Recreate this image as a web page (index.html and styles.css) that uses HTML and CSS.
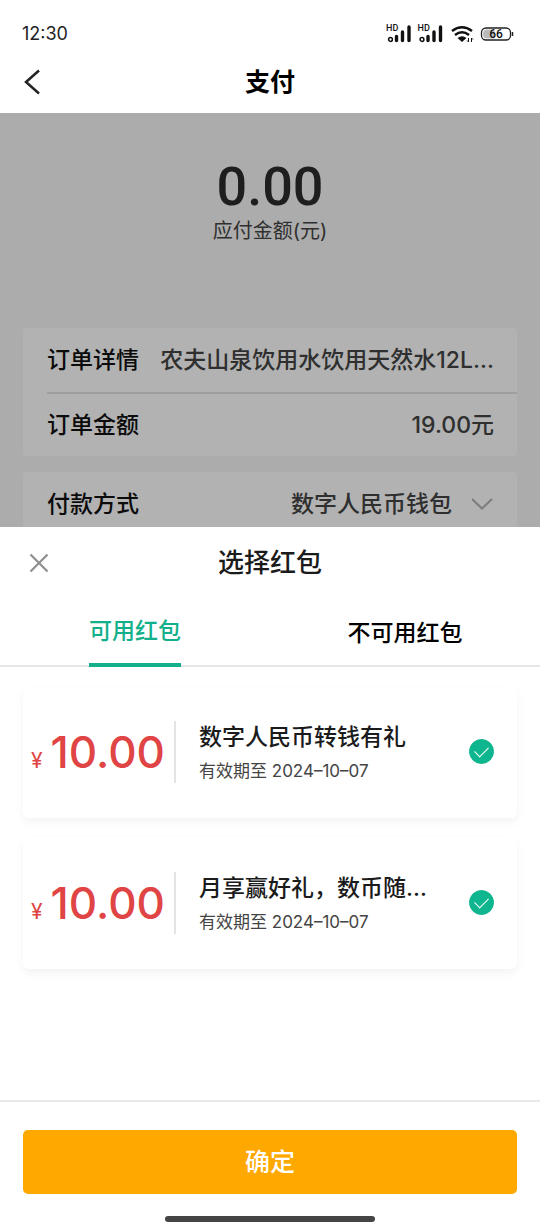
FILE: index.html
```html
<!DOCTYPE html>
<html lang="zh-CN">
<head>
<meta charset="utf-8">
<meta name="viewport" content="width=device-width, initial-scale=1">
<title>支付</title>
<link rel="stylesheet" href="styles.css">
</head>
<body>
<div class="status-bar">
  <span class="clock">12:30</span>
  <svg class="status-icons" width="130" height="24" viewBox="0 0 130 24" aria-hidden="true">
    <defs>
      <g id="signal">
        <text x="0" y="9" class="hd">HD</text>
        <circle cx="4.500" cy="17.500" r="1.900" fill="none" stroke="#111" stroke-width="1.500"/>
        <path d="M10.500 18.500V14.500M16.500 18.500V10M23 18.500V5" fill="none" stroke="#111" stroke-width="3.400" stroke-linecap="round"/>
      </g>
    </defs>
    <use href="#signal" x="0" y="0"/>
    <use href="#signal" x="31.500" y="0"/>
    <g fill="none" stroke="#111" stroke-width="2.500">
      <path d="M66 9Q76 1.500 86 9"/>
      <path d="M69 13Q76 7.500 83 13"/>
    </g>
    <path d="M71.500 16Q76 12.500 80.500 16L76 20Z" fill="#111"/>
    <path d="M82.500 16v4l-1.500-1.500M85.500 20v-4l1.500 1.500" fill="none" stroke="#111" stroke-width="1"/>
    <rect x="95.500" y="6" width="29" height="12" rx="4.500" fill="#fff" stroke="#222" stroke-width="1.300"/>
    <path d="M100.500 7.500h8v9h-8q-3.500 0-3.500-4.500t3.500-4.500Z" fill="#bbb"/>
    <path d="M126.500 10v4" stroke="#222" stroke-width="1.500"/>
    <text x="110" y="16" text-anchor="middle" class="battery">66</text>
  </svg>
</div>
<header class="nav">
  <button class="icon-button" type="button" aria-label="返回">
    <svg width="18" height="26" viewBox="0 0 18 26" aria-hidden="true"><path d="M15 1.500L2 13L15 24.500" fill="none" stroke="#222" stroke-width="2.500"/></svg>
  </button>
  <h1 class="nav-title">支付</h1>
</header>
<main class="payment">
  <div class="total">
    <strong class="total-value">0.00</strong>
    <span class="total-label">应付金额(元)</span>
  </div>
  <section class="panel">
    <div class="row"><span class="row-label">订单详情</span><span class="row-value">农夫山泉饮用水饮用天然水12L…</span></div>
    <div class="row row-divided"><span class="row-label">订单金额</span><span class="row-value">19.00元</span></div>
  </section>
  <section class="panel panel-last">
    <div class="row"><span class="row-label">付款方式</span><span class="row-value">数字人民币钱包</span>
      <svg class="chevron" width="22" height="14" viewBox="0 0 22 14" aria-hidden="true"><path d="M0 2L10 11.500L20 2" fill="none" stroke="#b5b5b5" stroke-width="2.200"/></svg>
    </div>
  </section>
</main>
<section class="sheet" role="dialog" aria-labelledby="sheet-title">
  <div class="sheet-head">
    <button class="icon-button" type="button" aria-label="关闭">
      <svg width="20" height="20" viewBox="0 0 20 20" aria-hidden="true"><path d="M1.500 1.500L18.500 18.500M18.500 1.500L1.500 18.500" fill="none" stroke="#909090" stroke-width="2.300"/></svg>
    </button>
    <h2 class="sheet-title" id="sheet-title">选择红包</h2>
  </div>
  <div class="tabs" role="tablist">
    <div class="tab-cell"><button class="tab tab-active" type="button" role="tab" aria-selected="true">可用红包</button></div>
    <div class="tab-cell"><button class="tab" type="button" role="tab" aria-selected="false">不可用红包</button></div>
  </div>
  <div class="coupons">
    <label class="coupon">
      <span class="price"><span class="currency">¥</span>10.00</span>
      <span class="info"><span class="coupon-title">数字人民币转钱有礼</span><span class="expiry">有效期至 2024–10–07</span></span>
      <input class="check" type="checkbox" checked>
    </label>
    <label class="coupon">
      <span class="price"><span class="currency">¥</span>10.00</span>
      <span class="info"><span class="coupon-title">月享赢好礼，数币随…</span><span class="expiry">有效期至 2024–10–07</span></span>
      <input class="check" type="checkbox" checked>
    </label>
  </div>
  <footer class="actions">
    <button class="confirm" type="button">确定</button>
  </footer>
  <div class="home-indicator"></div>
</section>
</body>
</html>
```
FILE: styles.css
```css
* { box-sizing: border-box; }
body {
  margin: 0;
  min-height: 100vh;
  display: flex;
  flex-direction: column;
  background: #fff;
  color: #1b1b1b;
  font-family: Inter, "Noto Sans CJK SC", sans-serif;
  font-weight: 500;
}
button { font: inherit; border: 0; margin: 0; padding: 0; background: none; cursor: pointer; }
svg { display: block; }
.status-bar { display: flex; align-items: center; justify-content: space-between; padding: 22px 24px 4px 22px; }
.clock { font-size: 18px; line-height: 24px; font-weight: 400; color: #222; }
.hd { font: 500 9px Roboto, sans-serif; fill: #111; }
.battery { font: 500 12px Roboto, sans-serif; fill: #111; }
.nav, .sheet-head { display: grid; grid-template-columns: 1fr auto 1fr; align-items: center; padding: 0 24px; }
.nav { height: 63px; }
.icon-button { justify-self: start; }
.nav-title, .sheet-title { margin: 0; font-size: 25px; line-height: 36px; font-weight: 500; }
.nav-title { color: #000; font-weight: 700; }
.sheet-title { font-size: 26px; }
.payment { position: relative; padding: 45px 23px 0; background: #f7f7f7; }
.payment::after { content: ""; position: absolute; inset: 0; background: rgba(0, 0, 0, 0.3); }
.total { display: flex; flex-direction: column; align-items: center; padding-bottom: 81px; }
.total-value { font-family: Roboto, sans-serif; font-size: 54px; line-height: 57px; font-weight: 500; color: #2c2c2c; }
.total-label { font-size: 20px; line-height: 32px; font-weight: 400; color: #444; }
.panel { background: #fff; border-radius: 4px; padding-left: 24px; margin-bottom: 16px; }
.panel-last { margin-bottom: 0; border-radius: 4px 4px 0 0; height: 55px; }
.row { display: flex; align-items: center; gap: 20px; height: 64px; padding-right: 23px; font-size: 23px; line-height: 32px; }
.row-divided { border-top: 2px solid #e2e2e2; }
.row-label { flex: none; color: #111; }
.row-value { flex: 1; min-width: 0; text-align: right; overflow: hidden; text-overflow: ellipsis; white-space: nowrap; color: #444; }
.chevron { flex: none; }
.sheet { flex: 1; display: flex; flex-direction: column; background: #fff; }
.sheet-head { height: 72px; padding-left: 29px; padding-right: 29px; }
.tabs { display: flex; border-bottom: 2px solid #e6e6e6; }
.tab-cell { flex: 1; display: flex; justify-content: center; height: 68px; margin-bottom: -2px; }
.tab { font-size: 23px; line-height: 32px; color: #000; }
.tab-active { color: #12b08a; border-bottom: 4px solid #12b08a; }
.coupons { display: flex; flex-direction: column; gap: 20px; padding: 20px 23px; }
.coupon { display: flex; align-items: center; height: 131px; padding: 0 23px 2px 8px; border-radius: 6px; background: #fff; box-shadow: 0 4px 10px rgba(0, 0, 0, 0.05); }
.price { flex: none; width: 145px; height: 62px; display: flex; align-items: baseline; gap: 8px; border-right: 2px solid #e4e4e4; color: #e04444; font-size: 44px; line-height: 62px; font-weight: 500; }
.currency { font-size: 21px; font-weight: 400; }
.info { flex: 1; min-width: 0; display: flex; flex-direction: column; gap: 4px; padding: 0 24px 0 23px; }
.coupon-title { font-size: 23px; line-height: 34px; overflow: hidden; text-overflow: ellipsis; white-space: nowrap; }
.expiry { font-size: 17px; line-height: 26px; font-weight: 400; color: #444; }
.check { appearance: none; flex: none; display: grid; place-items: center; width: 25px; height: 25px; margin: 0; border: 1px solid #bbb; border-radius: 50%; }
.check:checked { background: #0db68e; border-color: #0db68e; }
.check:checked::after { content: ""; width: 12px; height: 7px; margin-bottom: 3px; border: solid #fff; border-width: 0 0 1px 1px; transform: rotate(-45deg); }
.actions { margin-top: auto; padding: 28px 23px 22px; border-top: 2px solid #e9e9e9; }
.confirm { display: block; width: 100%; height: 64px; border-radius: 5px; background: #ffa800; color: #fff; font-size: 25px; line-height: 36px; }
.home-indicator { width: 210px; height: 6px; margin: 0 auto 8px; border-radius: 3px; background: #444; }
```
